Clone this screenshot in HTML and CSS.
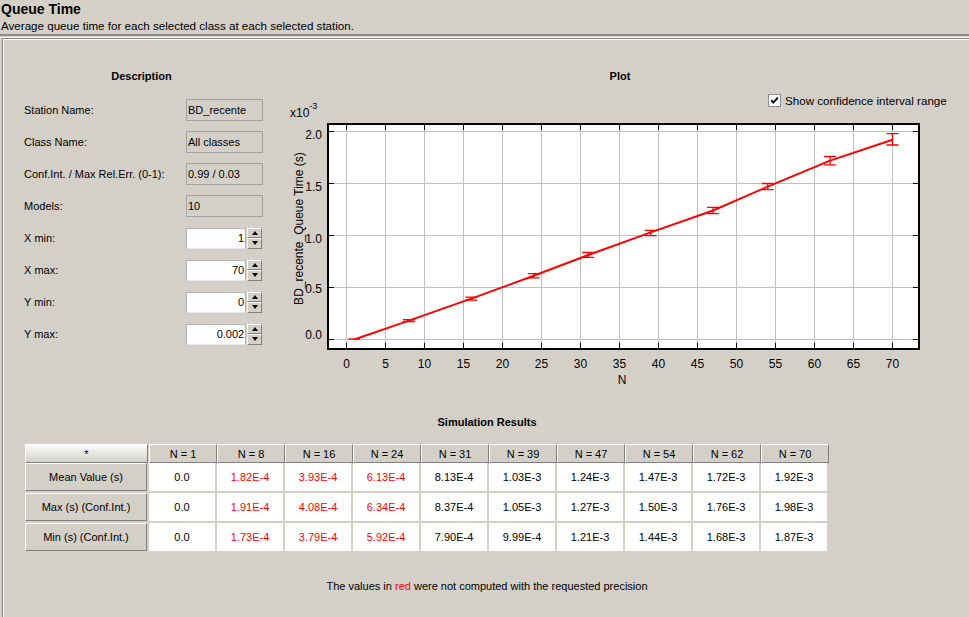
FILE: index.html
```html
<!DOCTYPE html>
<html>
<head>
<meta charset="utf-8">
<title>Queue Time</title>
<link rel="stylesheet" href="styles.css">
</head>
<body>
<div class="hdr">
  <div class="title">Queue Time</div>
  <div class="subtitle">Average queue time for each selected class at each selected station.</div>
</div>
<div class="sep"></div>
<div class="panel">
  <div class="top">
    <div class="desc">
      <div class="heading">Description</div>
      <div class="rows">
        <div class="row"><span class="lbl">Station Name:</span><span class="ro">BD_recente</span></div>
        <div class="row"><span class="lbl">Class Name:</span><span class="ro">All classes</span></div>
        <div class="row"><span class="lbl">Conf.Int. / Max Rel.Err. (0-1):</span><span class="ro">0.99 / 0.03</span></div>
        <div class="row"><span class="lbl">Models:</span><span class="ro">10</span></div>
        <div class="row"><span class="lbl">X min:</span><span class="spin"><span class="val">1</span><span class="btns"><span class="btn"><span class="up"></span></span><span class="btn"><span class="dn"></span></span></span></span></div>
        <div class="row"><span class="lbl">X max:</span><span class="spin"><span class="val">70</span><span class="btns"><span class="btn"><span class="up"></span></span><span class="btn"><span class="dn"></span></span></span></span></div>
        <div class="row"><span class="lbl">Y min:</span><span class="spin"><span class="val">0</span><span class="btns"><span class="btn"><span class="up"></span></span><span class="btn"><span class="dn"></span></span></span></span></div>
        <div class="row"><span class="lbl">Y max:</span><span class="spin"><span class="val">0.002</span><span class="btns"><span class="btn"><span class="up"></span></span><span class="btn"><span class="dn"></span></span></span></span></div>
      </div>
    </div>
    <div class="plot">
      <div class="heading">Plot</div>
      <div class="chk">
        <span class="box"><svg width="11" height="11" viewBox="0 0 11 11"><path d="M2.2 5.2 L4.4 7.6 L8.8 2.6" fill="none" stroke="#000" stroke-width="1.9"/></svg></span>
        <span class="chklbl">Show confidence interval range</span>
      </div>
      <svg class="chart" width="660" height="291" viewBox="280 102 660 291">
        <rect x="328" y="124" width="591" height="225" fill="#fff"/>
        <g stroke="#c0c0c0" stroke-width="1">
          <line x1="346.5" y1="125" x2="346.5" y2="348"/>
          <line x1="385.5" y1="125" x2="385.5" y2="348"/>
          <line x1="424.5" y1="125" x2="424.5" y2="348"/>
          <line x1="463.5" y1="125" x2="463.5" y2="348"/>
          <line x1="502.5" y1="125" x2="502.5" y2="348"/>
          <line x1="541.5" y1="125" x2="541.5" y2="348"/>
          <line x1="580.5" y1="125" x2="580.5" y2="348"/>
          <line x1="619.5" y1="125" x2="619.5" y2="348"/>
          <line x1="658.5" y1="125" x2="658.5" y2="348"/>
          <line x1="697.5" y1="125" x2="697.5" y2="348"/>
          <line x1="736.5" y1="125" x2="736.5" y2="348"/>
          <line x1="775.5" y1="125" x2="775.5" y2="348"/>
          <line x1="814.5" y1="125" x2="814.5" y2="348"/>
          <line x1="853.5" y1="125" x2="853.5" y2="348"/>
          <line x1="892.5" y1="125" x2="892.5" y2="348"/>
          <line x1="329" y1="131.5" x2="918" y2="131.5"/>
          <line x1="329" y1="183.5" x2="918" y2="183.5"/>
          <line x1="329" y1="235.5" x2="918" y2="235.5"/>
          <line x1="329" y1="287.5" x2="918" y2="287.5"/>
          <line x1="329" y1="339.5" x2="918" y2="339.5"/>
        </g>
        <g stroke="#000" stroke-width="1">
          <path d="M329 131.5h5M329 183.5h5M329 235.5h5M329 287.5h5M329 339.5h5"/>
          <path d="M913 131.5h5M913 183.5h5M913 235.5h5M913 287.5h5M913 339.5h5"/>
          <path d="M346.5 125v5M385.5 125v5M424.5 125v5M463.5 125v5M502.5 125v5M541.5 125v5M580.5 125v5M619.5 125v5M658.5 125v5M697.5 125v5M736.5 125v5M775.5 125v5M814.5 125v5M853.5 125v5M892.5 125v5"/>
          <path d="M346.5 343v5M385.5 343v5M424.5 343v5M463.5 343v5M502.5 343v5M541.5 343v5M580.5 343v5M619.5 343v5M658.5 343v5M697.5 343v5M736.5 343v5M775.5 343v5M814.5 343v5M853.5 343v5M892.5 343v5"/>
        </g>
        <rect x="328" y="124" width="591" height="225" fill="none" stroke="#000" stroke-width="2"/>
        <g class="tick" text-anchor="end">
          <text x="322" y="138.5">2.0</text>
          <text x="322" y="191">1.5</text>
          <text x="322" y="243">1.0</text>
          <text x="322" y="293">0.5</text>
          <text x="322" y="339">0.0</text>
        </g>
        <g class="tick" text-anchor="middle">
          <text x="346.5" y="368">0</text>
          <text x="385.5" y="368">5</text>
          <text x="424.5" y="368">10</text>
          <text x="463.5" y="368">15</text>
          <text x="502.5" y="368">20</text>
          <text x="541.5" y="368">25</text>
          <text x="580.5" y="368">30</text>
          <text x="619.5" y="368">35</text>
          <text x="658.5" y="368">40</text>
          <text x="697.5" y="368">45</text>
          <text x="736.5" y="368">50</text>
          <text x="775.5" y="368">55</text>
          <text x="814.5" y="368">60</text>
          <text x="853.5" y="368">65</text>
          <text x="892.5" y="368">70</text>
          <text x="622" y="384">N</text>
        </g>
        <text class="tick" x="290" y="117">x10<tspan class="sup" dy="-8.5">-3</tspan></text>
        <text class="tick" text-anchor="middle" transform="translate(302.5 228.5) rotate(-90)">BD_recente_Queue Time (s)</text>
        <polyline fill="none" stroke="#ff0000" stroke-width="2" points="354.3,339.5 408.9,320.6 471.3,298.6 533.7,275.8 588.3,255 650.7,232.4 713.1,210.5 767.7,186.6 830.1,160.6 892.5,139.8"/>
        <g stroke="#ff0000" stroke-width="1.3" fill="none">
          <path d="M348.3 339h12"/>
          <path d="M408.9 319.6v1.9M402.9 319.6h12M402.9 321.5h12"/>
          <path d="M471.3 297.1v3M465.3 297.1h12M465.3 300.1h12"/>
          <path d="M533.7 273.6v4.3M527.7 273.6h12M527.7 277.9h12"/>
          <path d="M588.3 252.5v4.9M582.3 252.5h12M582.3 257.3h12"/>
          <path d="M650.7 230.3v5.3M644.7 230.3h12M644.7 235.6h12"/>
          <path d="M713.1 207.4v6.3M707.1 207.4h12M707.1 213.7h12"/>
          <path d="M767.7 183.5v6.2M761.7 183.5h12M761.7 189.7h12"/>
          <path d="M830.1 156.5v8.3M824.1 156.5h12M824.1 164.8h12"/>
          <path d="M892.5 133.6v11.4M886.5 133.6h12M886.5 145h12"/>
        </g>
      </svg>
    </div>
  </div>
  <div class="results">
    <div class="heading">Simulation Results</div>
    <div class="tbl">
      <div class="th corner">*</div>
      <div class="th">N = 1</div>
      <div class="th">N = 8</div>
      <div class="th">N = 16</div>
      <div class="th">N = 24</div>
      <div class="th">N = 31</div>
      <div class="th">N = 39</div>
      <div class="th">N = 47</div>
      <div class="th">N = 54</div>
      <div class="th">N = 62</div>
      <div class="th">N = 70</div>

      <div class="rh">Mean Value (s)</div>
      <div class="td">0.0</div>
      <div class="td r">1.82E-4</div>
      <div class="td r">3.93E-4</div>
      <div class="td r">6.13E-4</div>
      <div class="td">8.13E-4</div>
      <div class="td">1.03E-3</div>
      <div class="td">1.24E-3</div>
      <div class="td">1.47E-3</div>
      <div class="td">1.72E-3</div>
      <div class="td">1.92E-3</div>

      <div class="rh">Max (s) (Conf.Int.)</div>
      <div class="td">0.0</div>
      <div class="td r">1.91E-4</div>
      <div class="td r">4.08E-4</div>
      <div class="td r">6.34E-4</div>
      <div class="td">8.37E-4</div>
      <div class="td">1.05E-3</div>
      <div class="td">1.27E-3</div>
      <div class="td">1.50E-3</div>
      <div class="td">1.76E-3</div>
      <div class="td">1.98E-3</div>

      <div class="rh">Min (s) (Conf.Int.)</div>
      <div class="td">0.0</div>
      <div class="td r">1.73E-4</div>
      <div class="td r">3.79E-4</div>
      <div class="td r">5.92E-4</div>
      <div class="td">7.90E-4</div>
      <div class="td">9.99E-4</div>
      <div class="td">1.21E-3</div>
      <div class="td">1.44E-3</div>
      <div class="td">1.68E-3</div>
      <div class="td">1.87E-3</div>
    </div>
    <div class="note">The values in <span class="red">red</span> were not computed with the requested precision</div>
  </div>
</div>
</body>
</html>
```

FILE: styles.css
```css
html, body {
  margin: 0;
  padding: 0;
}
body {
  background: #d4d0c8;
  font-family: "Liberation Sans", Arial, sans-serif;
  font-size: 11px;
  color: #000;
  width: 969px;
  height: 617px;
  overflow: hidden;
}
.hdr {
  padding: 1px 0 0 1px;
}
.title {
  font-size: 14px;
  font-weight: bold;
  line-height: 17px;
}
.subtitle {
  font-size: 11.6px;
  line-height: 14px;
  margin-top: 1px;
}
.sep {
  margin-top: 1px;
  height: 1px;
  border-top: 2px solid #8c8c8c;
  border-bottom: 1px solid #ffffff;
}
.panel {
  margin-left: 2px;
  width: 970px;
  height: 579px;
  border: 1px solid #808080;
  border-bottom: none;
  box-shadow: inset 1px 1px #ffffff;
  padding-top: 31px;
  box-sizing: border-box;
}
.top {
  display: flex;
}
.heading {
  font-weight: bold;
  text-align: center;
  line-height: 13px;
}
.desc {
  width: 277px;
}
.rows {
  margin-top: 16px;
  padding-left: 21px;
}
.row {
  display: flex;
  align-items: center;
  height: 22px;
  margin-bottom: 10px;
}
.lbl {
  width: 162px;
}
.ro {
  width: 77px;
  height: 22px;
  box-sizing: border-box;
  border: 1px solid #a3a3a3;
  padding-left: 1px;
  line-height: 20px;
}
.spin {
  display: flex;
  width: 76px;
  height: 21px;
}
.val {
  width: 61px;
  box-sizing: border-box;
  background: #ffffff;
  border: 1px solid #b4b4b4;
  border-bottom-color: #e8e8e8;
  text-align: right;
  padding-right: 1px;
  line-height: 19px;
}
.btns {
  width: 15px;
  display: flex;
  flex-direction: column;
  margin-left: 1px;
}
.btn {
  flex: 1;
  box-sizing: border-box;
  background: #d4d0c8;
  border-top: 1px solid #ffffff;
  border-left: 1px solid #ffffff;
  border-right: 1px solid #808080;
  border-bottom: 1px solid #808080;
  display: flex;
  align-items: center;
  justify-content: center;
}
.up {
  width: 0;
  height: 0;
  border-left: 3.5px solid transparent;
  border-right: 3.5px solid transparent;
  border-bottom: 4px solid #000;
}
.dn {
  width: 0;
  height: 0;
  border-left: 3.5px solid transparent;
  border-right: 3.5px solid transparent;
  border-top: 4px solid #000;
}
.plot {
  width: 680px;
}
.chk {
  margin-top: 11px;
  height: 13px;
  display: flex;
  align-items: center;
  padding-left: 488px;
  position: relative;
  z-index: 1;
}
.box {
  width: 13px;
  height: 13px;
  box-sizing: border-box;
  border: 1px solid #8e8f8f;
  background: #ffffff;
  display: flex;
  align-items: center;
  justify-content: center;
}
.box svg {
  display: block;
}
.chklbl {
  margin-left: 4px;
  font-size: 11.6px;
}
.chart {
  display: block;
  margin-top: -5px;
}
.tick {
  font-family: "Liberation Sans", Arial, sans-serif;
  font-size: 12px;
  fill: #000;
}
.sup {
  font-size: 9px;
}
.results .heading {
  margin-top: 23px;
}
.tbl {
  margin: 15px 0 0 22px;
  display: grid;
  grid-template-columns: 124px repeat(10, 68px);
  grid-template-rows: 19px repeat(3, 30px);
  width: 804px;
}
.th {
  box-sizing: border-box;
  background: #d4d0c8;
  border-top: 1px solid #ffffff;
  border-left: 1px solid #ffffff;
  border-right: 1px solid #808080;
  border-bottom: 1px solid #808080;
  display: flex;
  align-items: center;
  justify-content: center;
}
.corner {
  background: linear-gradient(#fcfcfb, #d4d0c8);
  margin-right: 1px;
}
.rh {
  box-sizing: border-box;
  margin: 0 2px 2px 0;
  background: #d4d0c8;
  border-top: 1px solid #ffffff;
  border-left: 1px solid #ffffff;
  border-right: 1px solid #808080;
  border-bottom: 1px solid #808080;
  display: flex;
  align-items: center;
  justify-content: center;
}
.td {
  background: #ffffff;
  margin: 0 2px 2px 0;
  display: flex;
  align-items: center;
  justify-content: center;
}
.r, .red {
  color: #ff0000;
}
.note {
  margin-top: 27px;
  text-align: center;
}
```
